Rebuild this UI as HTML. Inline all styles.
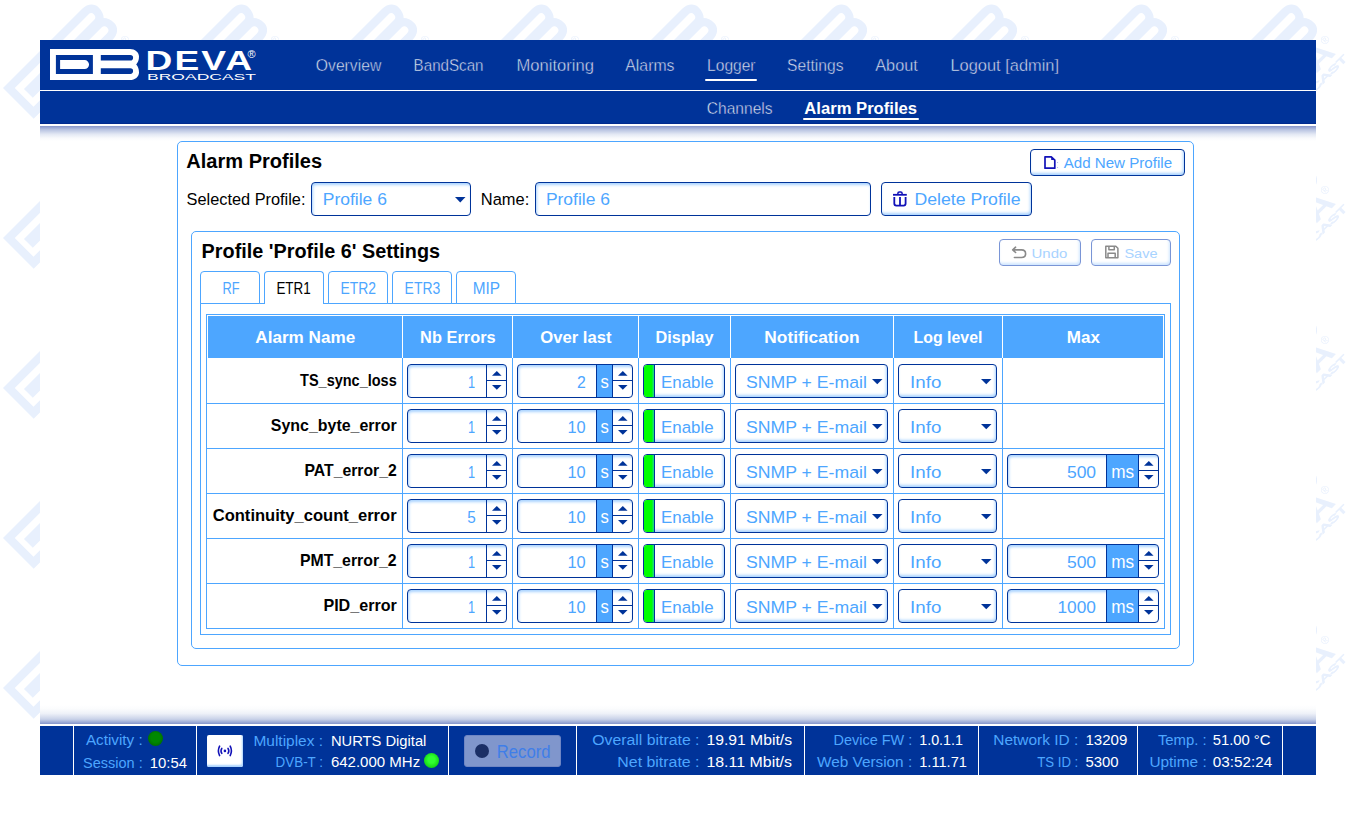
<!DOCTYPE html>
<html><head><meta charset="utf-8"><style>
html,body{margin:0;padding:0;}
body{width:1356px;height:815px;position:relative;overflow:hidden;background:#fff;font-family:"Liberation Sans", sans-serif;}
svg text{font-family:"Liberation Sans", sans-serif;}
</style></head><body>
<svg style="position:absolute;left:0;top:0" width="1350" height="775"><defs><pattern id="wm" x="0" y="0" width="150" height="150" patternUnits="userSpaceOnUse">
<g transform="translate(3,88) rotate(-45) scale(1.4)" fill="#e8f0fd">
<path fill-rule="evenodd" d="M0 0H80C85 0 89 3.2 89 7.6C89 11 88 13.6 86.2 15.5C88 17.4 89 20 89 23.4C89 27.8 85 31 80 31H0Z M5.9 6H42.9V24.9H5.9Z M10.1 11.1H34.6A4.45 4.45 0 0 1 34.6 20H10.1Z M50.8 6H80.3A2.8 2.8 0 0 1 80.3 11.6H50.8Z M50.8 19.3H80.3A2.8 2.8 0 0 1 80.3 24.9H50.8Z"/>
<text x="7" y="50" font-weight="bold" font-size="21" textLength="78" lengthAdjust="spacingAndGlyphs">DEVA</text>
<text x="83" y="40" font-size="8">®</text>
<text x="7" y="58.5" font-size="6.8" stroke="#e8f0fd" stroke-width="0.5" textLength="81" lengthAdjust="spacingAndGlyphs">BROADCAST</text>
</g></pattern></defs><rect width="1350" height="775" fill="url(#wm)"/></svg>
<div style="position:absolute;left:40px;top:40px;width:1276px;height:735px;box-sizing:border-box;background:#fff;"></div>
<div style="position:absolute;left:40px;top:40px;width:1276px;height:50px;box-sizing:border-box;background:#003399;"></div>
<div style="position:absolute;left:40px;top:90px;width:1276px;height:1px;box-sizing:border-box;background:#fff;"></div>
<div style="position:absolute;left:40px;top:91px;width:1276px;height:33px;box-sizing:border-box;background:#003399;"></div>
<div style="position:absolute;left:40px;top:124px;width:1276px;height:2px;box-sizing:border-box;background:#fff;"></div>
<div style="position:absolute;left:40px;top:123px;width:1276px;height:1px;box-sizing:border-box;background:#002a8f;"></div>
<div style="position:absolute;left:40px;top:126px;width:1276px;height:15px;box-sizing:border-box;background:linear-gradient(#8595cb,#b9c4e2 25%,#e3e8f4 55%,#f8f9fc 80%,#ffffff);"></div>
<svg style="position:absolute;left:50px;top:49px;overflow:visible" width="210" height="32" viewBox="0 0 210 32"><path fill="#fff" fill-rule="evenodd" d="M0 0H80C85 0 89 3.2 89 7.6C89 11 88 13.6 86.2 15.5C88 17.4 89 20 89 23.4C89 27.8 85 31 80 31H0Z M5.9 6H42.9V24.9H5.9Z M10.1 11.1H34.6A4.45 4.45 0 0 1 34.6 20H10.1Z M50.8 6H80.3A2.8 2.8 0 0 1 80.3 11.6H50.8Z M50.8 19.3H80.3A2.8 2.8 0 0 1 80.3 24.9H50.8Z"/>
<text x="95.6" y="20.6" font-weight="bold" font-size="27.5" fill="#fff" textLength="108.5" lengthAdjust="spacingAndGlyphs" style="letter-spacing:1.5px">DEVA</text>
<text x="197.5" y="9" font-size="11" fill="#fff">®</text>
<text x="97" y="30.7" font-size="8.4" fill="#fff" textLength="109" lengthAdjust="spacingAndGlyphs">BROADCAST</text></svg>
<div style="position:absolute;left:704.5px;top:79px;width:52px;height:2px;box-sizing:border-box;background:#fff;border-radius:1px;"></div>
<div style="position:absolute;left:802.5px;top:118px;width:116px;height:2px;box-sizing:border-box;background:#fff;border-radius:1px;"></div>
<div style="position:absolute;left:177px;top:141px;width:1017px;height:525px;box-sizing:border-box;border:1px solid #4da6ff;border-radius:5px;"></div>
<div style="position:absolute;left:1030px;top:149px;width:155px;height:27px;box-sizing:border-box;border:1px solid #003399;border-radius:4px;background:#fff;box-shadow:inset -1px -2px 3px #a9d3ff;"></div>
<svg style="position:absolute;left:1040px;top:152px;overflow:visible" width="24" height="20" viewBox="0 0 24 20"><path d="M5 4.8H11.3L14.8 8.2V16.2H5Z" fill="none" stroke="#1212b8" stroke-width="1.7" stroke-linejoin="round"/><path d="M11.2 4.8V8.1H14.8Z" fill="#1212b8"/><circle cx="17.6" cy="10.5" r="0.5" fill="#9aa0e0"/><circle cx="17.6" cy="15.5" r="0.5" fill="#9aa0e0"/></svg>
<div style="position:absolute;left:311px;top:182px;width:160px;height:34px;box-sizing:border-box;border:1px solid #003399;border-radius:4px;background:#fff;box-shadow:inset 1px 2px 3px #a9d3ff;"></div>
<svg style="position:absolute;left:454.5px;top:196.5px;overflow:visible" width="11" height="6" viewBox="0 0 11 6"><path d="M0 0H10.5L5.25 5.5Z" fill="#003399"/></svg>
<div style="position:absolute;left:535px;top:182px;width:336px;height:34px;box-sizing:border-box;border:1px solid #003399;border-radius:4px;background:#fff;box-shadow:inset 1px 2px 3px #a9d3ff;"></div>
<div style="position:absolute;left:881px;top:182px;width:151px;height:34px;box-sizing:border-box;border:1px solid #003399;border-radius:4px;background:#fff;box-shadow:inset -1px -2px 3px #a9d3ff;"></div>
<svg style="position:absolute;left:888px;top:186px;overflow:visible" width="24" height="24" viewBox="0 0 24 24"><g fill="none" stroke="#1212b8" stroke-width="1.8"><path d="M5 8.8H18.8"/><path d="M9.9 8V7.2Q9.9 5.9 11.3 5.9H12.7Q14.1 5.9 14.1 7.2V8" stroke-width="1.5"/><path d="M6.3 11V17.6Q6.3 19.6 8.3 19.6H15.6Q17.6 19.6 17.6 17.6V11M12 11V19.6"/></g></svg>
<div style="position:absolute;left:191px;top:231px;width:989px;height:418px;box-sizing:border-box;border:1px solid #4da6ff;border-radius:5px;"></div>
<div style="position:absolute;left:999px;top:239px;width:82px;height:27px;box-sizing:border-box;border:1px solid #7a95d6;border-radius:4px;background:#fff;box-shadow:inset -1px -2px 3px #cfe6ff;"></div>
<svg style="position:absolute;left:1008px;top:242px;overflow:visible" width="24" height="20" viewBox="0 0 24 20"><path d="M7.6 5.2L4.7 7.9L7.6 10.5M4.7 7.9H13.5Q17.6 7.9 17.6 11.7Q17.6 15.5 13.5 15.5H6.4" fill="none" stroke="#8a8a8a" stroke-width="1.6" stroke-linejoin="round" stroke-linecap="round"/></svg>
<div style="position:absolute;left:1091px;top:239px;width:80px;height:27px;box-sizing:border-box;border:1px solid #7a95d6;border-radius:4px;background:#fff;box-shadow:inset -1px -2px 3px #cfe6ff;"></div>
<svg style="position:absolute;left:1100px;top:241px;overflow:visible" width="24" height="22" viewBox="0 0 24 22"><g fill="none" stroke="#8a8a8a" stroke-width="1.5" stroke-linejoin="round"><path d="M5.8 5.2H15.8L17.9 7.3V16.8H5.8Z"/><path d="M8.9 5.2V8.7H14.3V5.2"/><path d="M8 16.8V12.3H15.2V16.8"/></g></svg>
<div style="position:absolute;left:200px;top:303px;width:971px;height:332px;box-sizing:border-box;border:1px solid #4da6ff;"></div>
<div style="position:absolute;left:200px;top:271px;width:60px;height:33px;box-sizing:border-box;border:1px solid #4da6ff;border-radius:4px 4px 0 0;background:#fff;"></div>
<div style="position:absolute;left:264px;top:271px;width:60px;height:33px;box-sizing:border-box;border:1px solid #4da6ff;border-bottom:none;border-radius:4px 4px 0 0;background:#fff;"></div>
<div style="position:absolute;left:328px;top:271px;width:60px;height:33px;box-sizing:border-box;border:1px solid #4da6ff;border-radius:4px 4px 0 0;background:#fff;"></div>
<div style="position:absolute;left:392px;top:271px;width:60px;height:33px;box-sizing:border-box;border:1px solid #4da6ff;border-radius:4px 4px 0 0;background:#fff;"></div>
<div style="position:absolute;left:456px;top:271px;width:60px;height:33px;box-sizing:border-box;border:1px solid #4da6ff;border-radius:4px 4px 0 0;background:#fff;"></div>
<div style="position:absolute;left:206px;top:314px;width:959px;height:315px;box-sizing:border-box;border:1px solid #4da6ff;"></div>
<div style="position:absolute;left:208px;top:316px;width:955px;height:42px;box-sizing:border-box;background:#4da6ff;"></div>
<div style="position:absolute;left:402px;top:316px;width:1px;height:42px;box-sizing:border-box;background:#fff;"></div>
<div style="position:absolute;left:402px;top:358px;width:1px;height:270px;box-sizing:border-box;background:#4da6ff;"></div>
<div style="position:absolute;left:512px;top:316px;width:1px;height:42px;box-sizing:border-box;background:#fff;"></div>
<div style="position:absolute;left:512px;top:358px;width:1px;height:270px;box-sizing:border-box;background:#4da6ff;"></div>
<div style="position:absolute;left:638px;top:316px;width:1px;height:42px;box-sizing:border-box;background:#fff;"></div>
<div style="position:absolute;left:638px;top:358px;width:1px;height:270px;box-sizing:border-box;background:#4da6ff;"></div>
<div style="position:absolute;left:730px;top:316px;width:1px;height:42px;box-sizing:border-box;background:#fff;"></div>
<div style="position:absolute;left:730px;top:358px;width:1px;height:270px;box-sizing:border-box;background:#4da6ff;"></div>
<div style="position:absolute;left:893px;top:316px;width:1px;height:42px;box-sizing:border-box;background:#fff;"></div>
<div style="position:absolute;left:893px;top:358px;width:1px;height:270px;box-sizing:border-box;background:#4da6ff;"></div>
<div style="position:absolute;left:1002px;top:316px;width:1px;height:42px;box-sizing:border-box;background:#fff;"></div>
<div style="position:absolute;left:1002px;top:358px;width:1px;height:270px;box-sizing:border-box;background:#4da6ff;"></div>
<div style="position:absolute;left:206px;top:403px;width:959px;height:1px;box-sizing:border-box;background:#4da6ff;"></div>
<div style="position:absolute;left:206px;top:448px;width:959px;height:1px;box-sizing:border-box;background:#4da6ff;"></div>
<div style="position:absolute;left:206px;top:493px;width:959px;height:1px;box-sizing:border-box;background:#4da6ff;"></div>
<div style="position:absolute;left:206px;top:538px;width:959px;height:1px;box-sizing:border-box;background:#4da6ff;"></div>
<div style="position:absolute;left:206px;top:583px;width:959px;height:1px;box-sizing:border-box;background:#4da6ff;"></div>
<div style="position:absolute;left:407px;top:364px;width:100px;height:34px;box-sizing:border-box;border:1px solid #003399;border-radius:4px;background:#fff;box-shadow:inset 1px 2px 3px #a9d3ff;"></div>
<div style="position:absolute;left:486px;top:364px;width:1px;height:34px;box-sizing:border-box;background:#003399;"></div>
<div style="position:absolute;left:486.5px;top:380px;width:20px;height:1px;box-sizing:border-box;background:#003399;"></div>
<svg style="position:absolute;left:492.1px;top:371.1px;overflow:visible" width="10" height="4.7" viewBox="0 0 10 4.7"><path d="M0 4.7H9.6L4.8 0Z" fill="#003399"/></svg>
<svg style="position:absolute;left:492.1px;top:385.2px;overflow:visible" width="10" height="4.7" viewBox="0 0 10 4.7"><path d="M0 0H9.6L4.8 4.7Z" fill="#003399"/></svg>
<div style="position:absolute;left:517px;top:364px;width:116px;height:34px;box-sizing:border-box;border:1px solid #003399;border-radius:4px;background:#fff;box-shadow:inset 1px 2px 3px #a9d3ff;"></div>
<div style="position:absolute;left:596.5px;top:365px;width:16px;height:32px;box-sizing:border-box;background:#4da6ff;"></div>
<div style="position:absolute;left:596px;top:364px;width:1px;height:34px;box-sizing:border-box;background:#003399;"></div>
<div style="position:absolute;left:612px;top:364px;width:1px;height:34px;box-sizing:border-box;background:#003399;"></div>
<div style="position:absolute;left:612.5px;top:380px;width:20px;height:1px;box-sizing:border-box;background:#003399;"></div>
<svg style="position:absolute;left:618.1px;top:371.1px;overflow:visible" width="10" height="4.7" viewBox="0 0 10 4.7"><path d="M0 4.7H9.6L4.8 0Z" fill="#003399"/></svg>
<svg style="position:absolute;left:618.1px;top:385.2px;overflow:visible" width="10" height="4.7" viewBox="0 0 10 4.7"><path d="M0 0H9.6L4.8 4.7Z" fill="#003399"/></svg>
<div style="position:absolute;left:643px;top:364px;width:82px;height:34px;box-sizing:border-box;border:1px solid #003399;border-radius:4px;background:#fff;box-shadow:inset -1px -2px 3px #a9d3ff;"></div>
<div style="position:absolute;left:644px;top:365px;width:10px;height:32px;box-sizing:border-box;background:linear-gradient(90deg,#00ff00 75%,#20d890);border-radius:3px 0 0 3px;"></div>
<div style="position:absolute;left:653.5px;top:364px;width:1px;height:34px;box-sizing:border-box;background:#003399;"></div>
<div style="position:absolute;left:735px;top:364px;width:153px;height:34px;box-sizing:border-box;border:1px solid #003399;border-radius:4px;background:#fff;box-shadow:inset -1px -2px 3px #a9d3ff;"></div>
<svg style="position:absolute;left:871.5px;top:378.7px;overflow:visible" width="10.5" height="6" viewBox="0 0 10.5 6"><path d="M0 0H10H10.5L5.25 5.2Z" fill="#003399"/></svg>
<div style="position:absolute;left:898px;top:364px;width:99px;height:34px;box-sizing:border-box;border:1px solid #003399;border-radius:4px;background:#fff;box-shadow:inset -1px -2px 3px #a9d3ff;"></div>
<svg style="position:absolute;left:981px;top:379px;overflow:visible" width="10.5" height="6" viewBox="0 0 10.5 6"><path d="M0 0H10.5L5.25 5.2Z" fill="#003399"/></svg>
<div style="position:absolute;left:407px;top:409px;width:100px;height:34px;box-sizing:border-box;border:1px solid #003399;border-radius:4px;background:#fff;box-shadow:inset 1px 2px 3px #a9d3ff;"></div>
<div style="position:absolute;left:486px;top:409px;width:1px;height:34px;box-sizing:border-box;background:#003399;"></div>
<div style="position:absolute;left:486.5px;top:425px;width:20px;height:1px;box-sizing:border-box;background:#003399;"></div>
<svg style="position:absolute;left:492.1px;top:416.1px;overflow:visible" width="10" height="4.7" viewBox="0 0 10 4.7"><path d="M0 4.7H9.6L4.8 0Z" fill="#003399"/></svg>
<svg style="position:absolute;left:492.1px;top:430.2px;overflow:visible" width="10" height="4.7" viewBox="0 0 10 4.7"><path d="M0 0H9.6L4.8 4.7Z" fill="#003399"/></svg>
<div style="position:absolute;left:517px;top:409px;width:116px;height:34px;box-sizing:border-box;border:1px solid #003399;border-radius:4px;background:#fff;box-shadow:inset 1px 2px 3px #a9d3ff;"></div>
<div style="position:absolute;left:596.5px;top:410px;width:16px;height:32px;box-sizing:border-box;background:#4da6ff;"></div>
<div style="position:absolute;left:596px;top:409px;width:1px;height:34px;box-sizing:border-box;background:#003399;"></div>
<div style="position:absolute;left:612px;top:409px;width:1px;height:34px;box-sizing:border-box;background:#003399;"></div>
<div style="position:absolute;left:612.5px;top:425px;width:20px;height:1px;box-sizing:border-box;background:#003399;"></div>
<svg style="position:absolute;left:618.1px;top:416.1px;overflow:visible" width="10" height="4.7" viewBox="0 0 10 4.7"><path d="M0 4.7H9.6L4.8 0Z" fill="#003399"/></svg>
<svg style="position:absolute;left:618.1px;top:430.2px;overflow:visible" width="10" height="4.7" viewBox="0 0 10 4.7"><path d="M0 0H9.6L4.8 4.7Z" fill="#003399"/></svg>
<div style="position:absolute;left:643px;top:409px;width:82px;height:34px;box-sizing:border-box;border:1px solid #003399;border-radius:4px;background:#fff;box-shadow:inset -1px -2px 3px #a9d3ff;"></div>
<div style="position:absolute;left:644px;top:410px;width:10px;height:32px;box-sizing:border-box;background:linear-gradient(90deg,#00ff00 75%,#20d890);border-radius:3px 0 0 3px;"></div>
<div style="position:absolute;left:653.5px;top:409px;width:1px;height:34px;box-sizing:border-box;background:#003399;"></div>
<div style="position:absolute;left:735px;top:409px;width:153px;height:34px;box-sizing:border-box;border:1px solid #003399;border-radius:4px;background:#fff;box-shadow:inset -1px -2px 3px #a9d3ff;"></div>
<svg style="position:absolute;left:871.5px;top:423.7px;overflow:visible" width="10.5" height="6" viewBox="0 0 10.5 6"><path d="M0 0H10H10.5L5.25 5.2Z" fill="#003399"/></svg>
<div style="position:absolute;left:898px;top:409px;width:99px;height:34px;box-sizing:border-box;border:1px solid #003399;border-radius:4px;background:#fff;box-shadow:inset -1px -2px 3px #a9d3ff;"></div>
<svg style="position:absolute;left:981px;top:424px;overflow:visible" width="10.5" height="6" viewBox="0 0 10.5 6"><path d="M0 0H10.5L5.25 5.2Z" fill="#003399"/></svg>
<div style="position:absolute;left:407px;top:454px;width:100px;height:34px;box-sizing:border-box;border:1px solid #003399;border-radius:4px;background:#fff;box-shadow:inset 1px 2px 3px #a9d3ff;"></div>
<div style="position:absolute;left:486px;top:454px;width:1px;height:34px;box-sizing:border-box;background:#003399;"></div>
<div style="position:absolute;left:486.5px;top:470px;width:20px;height:1px;box-sizing:border-box;background:#003399;"></div>
<svg style="position:absolute;left:492.1px;top:461.1px;overflow:visible" width="10" height="4.7" viewBox="0 0 10 4.7"><path d="M0 4.7H9.6L4.8 0Z" fill="#003399"/></svg>
<svg style="position:absolute;left:492.1px;top:475.2px;overflow:visible" width="10" height="4.7" viewBox="0 0 10 4.7"><path d="M0 0H9.6L4.8 4.7Z" fill="#003399"/></svg>
<div style="position:absolute;left:517px;top:454px;width:116px;height:34px;box-sizing:border-box;border:1px solid #003399;border-radius:4px;background:#fff;box-shadow:inset 1px 2px 3px #a9d3ff;"></div>
<div style="position:absolute;left:596.5px;top:455px;width:16px;height:32px;box-sizing:border-box;background:#4da6ff;"></div>
<div style="position:absolute;left:596px;top:454px;width:1px;height:34px;box-sizing:border-box;background:#003399;"></div>
<div style="position:absolute;left:612px;top:454px;width:1px;height:34px;box-sizing:border-box;background:#003399;"></div>
<div style="position:absolute;left:612.5px;top:470px;width:20px;height:1px;box-sizing:border-box;background:#003399;"></div>
<svg style="position:absolute;left:618.1px;top:461.1px;overflow:visible" width="10" height="4.7" viewBox="0 0 10 4.7"><path d="M0 4.7H9.6L4.8 0Z" fill="#003399"/></svg>
<svg style="position:absolute;left:618.1px;top:475.2px;overflow:visible" width="10" height="4.7" viewBox="0 0 10 4.7"><path d="M0 0H9.6L4.8 4.7Z" fill="#003399"/></svg>
<div style="position:absolute;left:643px;top:454px;width:82px;height:34px;box-sizing:border-box;border:1px solid #003399;border-radius:4px;background:#fff;box-shadow:inset -1px -2px 3px #a9d3ff;"></div>
<div style="position:absolute;left:644px;top:455px;width:10px;height:32px;box-sizing:border-box;background:linear-gradient(90deg,#00ff00 75%,#20d890);border-radius:3px 0 0 3px;"></div>
<div style="position:absolute;left:653.5px;top:454px;width:1px;height:34px;box-sizing:border-box;background:#003399;"></div>
<div style="position:absolute;left:735px;top:454px;width:153px;height:34px;box-sizing:border-box;border:1px solid #003399;border-radius:4px;background:#fff;box-shadow:inset -1px -2px 3px #a9d3ff;"></div>
<svg style="position:absolute;left:871.5px;top:468.7px;overflow:visible" width="10.5" height="6" viewBox="0 0 10.5 6"><path d="M0 0H10H10.5L5.25 5.2Z" fill="#003399"/></svg>
<div style="position:absolute;left:898px;top:454px;width:99px;height:34px;box-sizing:border-box;border:1px solid #003399;border-radius:4px;background:#fff;box-shadow:inset -1px -2px 3px #a9d3ff;"></div>
<svg style="position:absolute;left:981px;top:469px;overflow:visible" width="10.5" height="6" viewBox="0 0 10.5 6"><path d="M0 0H10.5L5.25 5.2Z" fill="#003399"/></svg>
<div style="position:absolute;left:1007px;top:454px;width:152px;height:34px;box-sizing:border-box;border:1px solid #003399;border-radius:4px;background:#fff;box-shadow:inset 1px 2px 3px #a9d3ff;"></div>
<div style="position:absolute;left:1106px;top:455px;width:32px;height:32px;box-sizing:border-box;background:#4da6ff;"></div>
<div style="position:absolute;left:1106px;top:454px;width:1px;height:34px;box-sizing:border-box;background:#003399;"></div>
<div style="position:absolute;left:1138px;top:454px;width:1px;height:34px;box-sizing:border-box;background:#003399;"></div>
<div style="position:absolute;left:1138.5px;top:470px;width:20px;height:1px;box-sizing:border-box;background:#003399;"></div>
<svg style="position:absolute;left:1144.1px;top:461.1px;overflow:visible" width="10" height="4.7" viewBox="0 0 10 4.7"><path d="M0 4.7H9.6L4.8 0Z" fill="#003399"/></svg>
<svg style="position:absolute;left:1144.1px;top:475.2px;overflow:visible" width="10" height="4.7" viewBox="0 0 10 4.7"><path d="M0 0H9.6L4.8 4.7Z" fill="#003399"/></svg>
<div style="position:absolute;left:407px;top:499px;width:100px;height:34px;box-sizing:border-box;border:1px solid #003399;border-radius:4px;background:#fff;box-shadow:inset 1px 2px 3px #a9d3ff;"></div>
<div style="position:absolute;left:486px;top:499px;width:1px;height:34px;box-sizing:border-box;background:#003399;"></div>
<div style="position:absolute;left:486.5px;top:515px;width:20px;height:1px;box-sizing:border-box;background:#003399;"></div>
<svg style="position:absolute;left:492.1px;top:506.1px;overflow:visible" width="10" height="4.7" viewBox="0 0 10 4.7"><path d="M0 4.7H9.6L4.8 0Z" fill="#003399"/></svg>
<svg style="position:absolute;left:492.1px;top:520.2px;overflow:visible" width="10" height="4.7" viewBox="0 0 10 4.7"><path d="M0 0H9.6L4.8 4.7Z" fill="#003399"/></svg>
<div style="position:absolute;left:517px;top:499px;width:116px;height:34px;box-sizing:border-box;border:1px solid #003399;border-radius:4px;background:#fff;box-shadow:inset 1px 2px 3px #a9d3ff;"></div>
<div style="position:absolute;left:596.5px;top:500px;width:16px;height:32px;box-sizing:border-box;background:#4da6ff;"></div>
<div style="position:absolute;left:596px;top:499px;width:1px;height:34px;box-sizing:border-box;background:#003399;"></div>
<div style="position:absolute;left:612px;top:499px;width:1px;height:34px;box-sizing:border-box;background:#003399;"></div>
<div style="position:absolute;left:612.5px;top:515px;width:20px;height:1px;box-sizing:border-box;background:#003399;"></div>
<svg style="position:absolute;left:618.1px;top:506.1px;overflow:visible" width="10" height="4.7" viewBox="0 0 10 4.7"><path d="M0 4.7H9.6L4.8 0Z" fill="#003399"/></svg>
<svg style="position:absolute;left:618.1px;top:520.2px;overflow:visible" width="10" height="4.7" viewBox="0 0 10 4.7"><path d="M0 0H9.6L4.8 4.7Z" fill="#003399"/></svg>
<div style="position:absolute;left:643px;top:499px;width:82px;height:34px;box-sizing:border-box;border:1px solid #003399;border-radius:4px;background:#fff;box-shadow:inset -1px -2px 3px #a9d3ff;"></div>
<div style="position:absolute;left:644px;top:500px;width:10px;height:32px;box-sizing:border-box;background:linear-gradient(90deg,#00ff00 75%,#20d890);border-radius:3px 0 0 3px;"></div>
<div style="position:absolute;left:653.5px;top:499px;width:1px;height:34px;box-sizing:border-box;background:#003399;"></div>
<div style="position:absolute;left:735px;top:499px;width:153px;height:34px;box-sizing:border-box;border:1px solid #003399;border-radius:4px;background:#fff;box-shadow:inset -1px -2px 3px #a9d3ff;"></div>
<svg style="position:absolute;left:871.5px;top:513.7px;overflow:visible" width="10.5" height="6" viewBox="0 0 10.5 6"><path d="M0 0H10H10.5L5.25 5.2Z" fill="#003399"/></svg>
<div style="position:absolute;left:898px;top:499px;width:99px;height:34px;box-sizing:border-box;border:1px solid #003399;border-radius:4px;background:#fff;box-shadow:inset -1px -2px 3px #a9d3ff;"></div>
<svg style="position:absolute;left:981px;top:514px;overflow:visible" width="10.5" height="6" viewBox="0 0 10.5 6"><path d="M0 0H10.5L5.25 5.2Z" fill="#003399"/></svg>
<div style="position:absolute;left:407px;top:544px;width:100px;height:34px;box-sizing:border-box;border:1px solid #003399;border-radius:4px;background:#fff;box-shadow:inset 1px 2px 3px #a9d3ff;"></div>
<div style="position:absolute;left:486px;top:544px;width:1px;height:34px;box-sizing:border-box;background:#003399;"></div>
<div style="position:absolute;left:486.5px;top:560px;width:20px;height:1px;box-sizing:border-box;background:#003399;"></div>
<svg style="position:absolute;left:492.1px;top:551.1px;overflow:visible" width="10" height="4.7" viewBox="0 0 10 4.7"><path d="M0 4.7H9.6L4.8 0Z" fill="#003399"/></svg>
<svg style="position:absolute;left:492.1px;top:565.2px;overflow:visible" width="10" height="4.7" viewBox="0 0 10 4.7"><path d="M0 0H9.6L4.8 4.7Z" fill="#003399"/></svg>
<div style="position:absolute;left:517px;top:544px;width:116px;height:34px;box-sizing:border-box;border:1px solid #003399;border-radius:4px;background:#fff;box-shadow:inset 1px 2px 3px #a9d3ff;"></div>
<div style="position:absolute;left:596.5px;top:545px;width:16px;height:32px;box-sizing:border-box;background:#4da6ff;"></div>
<div style="position:absolute;left:596px;top:544px;width:1px;height:34px;box-sizing:border-box;background:#003399;"></div>
<div style="position:absolute;left:612px;top:544px;width:1px;height:34px;box-sizing:border-box;background:#003399;"></div>
<div style="position:absolute;left:612.5px;top:560px;width:20px;height:1px;box-sizing:border-box;background:#003399;"></div>
<svg style="position:absolute;left:618.1px;top:551.1px;overflow:visible" width="10" height="4.7" viewBox="0 0 10 4.7"><path d="M0 4.7H9.6L4.8 0Z" fill="#003399"/></svg>
<svg style="position:absolute;left:618.1px;top:565.2px;overflow:visible" width="10" height="4.7" viewBox="0 0 10 4.7"><path d="M0 0H9.6L4.8 4.7Z" fill="#003399"/></svg>
<div style="position:absolute;left:643px;top:544px;width:82px;height:34px;box-sizing:border-box;border:1px solid #003399;border-radius:4px;background:#fff;box-shadow:inset -1px -2px 3px #a9d3ff;"></div>
<div style="position:absolute;left:644px;top:545px;width:10px;height:32px;box-sizing:border-box;background:linear-gradient(90deg,#00ff00 75%,#20d890);border-radius:3px 0 0 3px;"></div>
<div style="position:absolute;left:653.5px;top:544px;width:1px;height:34px;box-sizing:border-box;background:#003399;"></div>
<div style="position:absolute;left:735px;top:544px;width:153px;height:34px;box-sizing:border-box;border:1px solid #003399;border-radius:4px;background:#fff;box-shadow:inset -1px -2px 3px #a9d3ff;"></div>
<svg style="position:absolute;left:871.5px;top:558.7px;overflow:visible" width="10.5" height="6" viewBox="0 0 10.5 6"><path d="M0 0H10H10.5L5.25 5.2Z" fill="#003399"/></svg>
<div style="position:absolute;left:898px;top:544px;width:99px;height:34px;box-sizing:border-box;border:1px solid #003399;border-radius:4px;background:#fff;box-shadow:inset -1px -2px 3px #a9d3ff;"></div>
<svg style="position:absolute;left:981px;top:559px;overflow:visible" width="10.5" height="6" viewBox="0 0 10.5 6"><path d="M0 0H10.5L5.25 5.2Z" fill="#003399"/></svg>
<div style="position:absolute;left:1007px;top:544px;width:152px;height:34px;box-sizing:border-box;border:1px solid #003399;border-radius:4px;background:#fff;box-shadow:inset 1px 2px 3px #a9d3ff;"></div>
<div style="position:absolute;left:1106px;top:545px;width:32px;height:32px;box-sizing:border-box;background:#4da6ff;"></div>
<div style="position:absolute;left:1106px;top:544px;width:1px;height:34px;box-sizing:border-box;background:#003399;"></div>
<div style="position:absolute;left:1138px;top:544px;width:1px;height:34px;box-sizing:border-box;background:#003399;"></div>
<div style="position:absolute;left:1138.5px;top:560px;width:20px;height:1px;box-sizing:border-box;background:#003399;"></div>
<svg style="position:absolute;left:1144.1px;top:551.1px;overflow:visible" width="10" height="4.7" viewBox="0 0 10 4.7"><path d="M0 4.7H9.6L4.8 0Z" fill="#003399"/></svg>
<svg style="position:absolute;left:1144.1px;top:565.2px;overflow:visible" width="10" height="4.7" viewBox="0 0 10 4.7"><path d="M0 0H9.6L4.8 4.7Z" fill="#003399"/></svg>
<div style="position:absolute;left:407px;top:589px;width:100px;height:34px;box-sizing:border-box;border:1px solid #003399;border-radius:4px;background:#fff;box-shadow:inset 1px 2px 3px #a9d3ff;"></div>
<div style="position:absolute;left:486px;top:589px;width:1px;height:34px;box-sizing:border-box;background:#003399;"></div>
<div style="position:absolute;left:486.5px;top:605px;width:20px;height:1px;box-sizing:border-box;background:#003399;"></div>
<svg style="position:absolute;left:492.1px;top:596.1px;overflow:visible" width="10" height="4.7" viewBox="0 0 10 4.7"><path d="M0 4.7H9.6L4.8 0Z" fill="#003399"/></svg>
<svg style="position:absolute;left:492.1px;top:610.2px;overflow:visible" width="10" height="4.7" viewBox="0 0 10 4.7"><path d="M0 0H9.6L4.8 4.7Z" fill="#003399"/></svg>
<div style="position:absolute;left:517px;top:589px;width:116px;height:34px;box-sizing:border-box;border:1px solid #003399;border-radius:4px;background:#fff;box-shadow:inset 1px 2px 3px #a9d3ff;"></div>
<div style="position:absolute;left:596.5px;top:590px;width:16px;height:32px;box-sizing:border-box;background:#4da6ff;"></div>
<div style="position:absolute;left:596px;top:589px;width:1px;height:34px;box-sizing:border-box;background:#003399;"></div>
<div style="position:absolute;left:612px;top:589px;width:1px;height:34px;box-sizing:border-box;background:#003399;"></div>
<div style="position:absolute;left:612.5px;top:605px;width:20px;height:1px;box-sizing:border-box;background:#003399;"></div>
<svg style="position:absolute;left:618.1px;top:596.1px;overflow:visible" width="10" height="4.7" viewBox="0 0 10 4.7"><path d="M0 4.7H9.6L4.8 0Z" fill="#003399"/></svg>
<svg style="position:absolute;left:618.1px;top:610.2px;overflow:visible" width="10" height="4.7" viewBox="0 0 10 4.7"><path d="M0 0H9.6L4.8 4.7Z" fill="#003399"/></svg>
<div style="position:absolute;left:643px;top:589px;width:82px;height:34px;box-sizing:border-box;border:1px solid #003399;border-radius:4px;background:#fff;box-shadow:inset -1px -2px 3px #a9d3ff;"></div>
<div style="position:absolute;left:644px;top:590px;width:10px;height:32px;box-sizing:border-box;background:linear-gradient(90deg,#00ff00 75%,#20d890);border-radius:3px 0 0 3px;"></div>
<div style="position:absolute;left:653.5px;top:589px;width:1px;height:34px;box-sizing:border-box;background:#003399;"></div>
<div style="position:absolute;left:735px;top:589px;width:153px;height:34px;box-sizing:border-box;border:1px solid #003399;border-radius:4px;background:#fff;box-shadow:inset -1px -2px 3px #a9d3ff;"></div>
<svg style="position:absolute;left:871.5px;top:603.7px;overflow:visible" width="10.5" height="6" viewBox="0 0 10.5 6"><path d="M0 0H10H10.5L5.25 5.2Z" fill="#003399"/></svg>
<div style="position:absolute;left:898px;top:589px;width:99px;height:34px;box-sizing:border-box;border:1px solid #003399;border-radius:4px;background:#fff;box-shadow:inset -1px -2px 3px #a9d3ff;"></div>
<svg style="position:absolute;left:981px;top:604px;overflow:visible" width="10.5" height="6" viewBox="0 0 10.5 6"><path d="M0 0H10.5L5.25 5.2Z" fill="#003399"/></svg>
<div style="position:absolute;left:1007px;top:589px;width:152px;height:34px;box-sizing:border-box;border:1px solid #003399;border-radius:4px;background:#fff;box-shadow:inset 1px 2px 3px #a9d3ff;"></div>
<div style="position:absolute;left:1106px;top:590px;width:32px;height:32px;box-sizing:border-box;background:#4da6ff;"></div>
<div style="position:absolute;left:1106px;top:589px;width:1px;height:34px;box-sizing:border-box;background:#003399;"></div>
<div style="position:absolute;left:1138px;top:589px;width:1px;height:34px;box-sizing:border-box;background:#003399;"></div>
<div style="position:absolute;left:1138.5px;top:605px;width:20px;height:1px;box-sizing:border-box;background:#003399;"></div>
<svg style="position:absolute;left:1144.1px;top:596.1px;overflow:visible" width="10" height="4.7" viewBox="0 0 10 4.7"><path d="M0 4.7H9.6L4.8 0Z" fill="#003399"/></svg>
<svg style="position:absolute;left:1144.1px;top:610.2px;overflow:visible" width="10" height="4.7" viewBox="0 0 10 4.7"><path d="M0 0H9.6L4.8 4.7Z" fill="#003399"/></svg>
<div style="position:absolute;left:40px;top:705px;width:1276px;height:19px;box-sizing:border-box;background:linear-gradient(#ffffff,#fbfcfd 20%,#eef1f8 45%,#c8d1e8 75%,#8596cc);"></div>
<div style="position:absolute;left:40px;top:726px;width:1276px;height:49px;box-sizing:border-box;background:#003399;"></div>
<div style="position:absolute;left:73px;top:726px;width:1px;height:49px;box-sizing:border-box;background:#fff;"></div>
<div style="position:absolute;left:196px;top:726px;width:1px;height:49px;box-sizing:border-box;background:#fff;"></div>
<div style="position:absolute;left:448px;top:726px;width:1px;height:49px;box-sizing:border-box;background:#fff;"></div>
<div style="position:absolute;left:576px;top:726px;width:1px;height:49px;box-sizing:border-box;background:#fff;"></div>
<div style="position:absolute;left:804px;top:726px;width:1px;height:49px;box-sizing:border-box;background:#fff;"></div>
<div style="position:absolute;left:978px;top:726px;width:1px;height:49px;box-sizing:border-box;background:#fff;"></div>
<div style="position:absolute;left:1137px;top:726px;width:1px;height:49px;box-sizing:border-box;background:#fff;"></div>
<div style="position:absolute;left:1282px;top:726px;width:1px;height:49px;box-sizing:border-box;background:#fff;"></div>
<div style="position:absolute;left:148px;top:731px;width:15px;height:15px;box-sizing:border-box;border-radius:50%;background:radial-gradient(circle at 50% 45%,#008800 40%,#005a00);"></div>
<div style="position:absolute;left:207px;top:735px;width:36px;height:32px;box-sizing:border-box;background:#fff;border-radius:2px;box-shadow:inset -1px -2px 2px #a9d3ff;"></div>
<svg style="position:absolute;left:205px;top:733px;overflow:visible" width="40" height="36" viewBox="0 0 40 36"><g fill="none" stroke="#1212b8" stroke-width="1.6" stroke-linecap="round"><path d="M14.6 13.2Q12.2 17.9 14.6 22.6"/><path d="M16.8 15.4Q15.2 17.9 16.8 20.4"/><path d="M23 15.4Q24.6 17.9 23 20.4"/><path d="M25.2 13.2Q27.6 17.9 25.2 22.6"/></g><circle cx="19.9" cy="17.9" r="1.3" fill="#1212b8"/></svg>
<div style="position:absolute;left:424px;top:753px;width:15px;height:15px;box-sizing:border-box;border-radius:50%;background:radial-gradient(circle at 50% 45%,#30ff30 30%,#00b800);"></div>
<div style="position:absolute;left:464px;top:735px;width:97px;height:32px;box-sizing:border-box;background:#8096cc;border:1px solid #6f86c4;border-radius:3px;"></div>
<div style="position:absolute;left:474.8px;top:743.6px;width:14.6px;height:14.6px;box-sizing:border-box;border-radius:50%;background:#1b2f66;"></div>
<svg style="position:absolute;left:0;top:0" width="1356" height="815">
<text stroke="#003399" stroke-width="0.45" transform="translate(315.80,71.00) scale(0.9651,1)" x="-0.00" y="0" font-size="16.3" fill="#e2e7f4">Overview</text>
<text stroke="#003399" stroke-width="0.45" transform="translate(413.60,71.00) scale(0.9305,1)" x="-0.00" y="0" font-size="16.3" fill="#e2e7f4">BandScan</text>
<text stroke="#003399" stroke-width="0.45" transform="translate(516.50,71.00) scale(1.0181,1)" x="-0.00" y="0" font-size="16.3" fill="#e2e7f4">Monitoring</text>
<text stroke="#003399" stroke-width="0.45" transform="translate(625.30,71.00) scale(0.9698,1)" x="-0.00" y="0" font-size="16.3" fill="#e2e7f4">Alarms</text>
<text stroke="#003399" stroke-width="0.45" transform="translate(707.10,71.00) scale(0.9552,1)" x="-0.00" y="0" font-size="16.3" fill="#e2e7f4">Logger</text>
<text stroke="#003399" stroke-width="0.45" transform="translate(787.10,71.00) scale(0.9578,1)" x="-0.00" y="0" font-size="16.3" fill="#e2e7f4">Settings</text>
<text stroke="#003399" stroke-width="0.45" transform="translate(875.20,71.00) scale(1.0027,1)" x="-0.00" y="0" font-size="16.3" fill="#e2e7f4">About</text>
<text stroke="#003399" stroke-width="0.45" transform="translate(950.40,71.00) scale(1.0081,1)" x="-0.00" y="0" font-size="16.3" fill="#e2e7f4">Logout [admin]</text>
<text stroke="#003399" stroke-width="0.45" transform="translate(706.80,113.80) scale(0.9555,1)" x="-0.00" y="0" font-size="16.3" fill="#e2e7f4">Channels</text>
<text transform="translate(804.30,113.80) scale(1.0398,1)" x="-0.00" y="0" font-size="16" font-weight="bold" fill="#fff">Alarm Profiles</text>
<text transform="translate(186.30,168.00) scale(1.0022,1)" x="-0.00" y="0" font-size="20" font-weight="bold" fill="#000">Alarm Profiles</text>
<text transform="translate(1063.70,167.70) scale(1.0436,1)" x="-0.00" y="0" font-size="14.5" fill="#4da6ff">Add New Profile</text>
<text transform="translate(186.60,205.30) scale(0.9903,1)" x="-0.00" y="0" font-size="16.5" fill="#000">Selected Profile:</text>
<text transform="translate(322.80,204.70) scale(1.0593,1)" x="-0.00" y="0" font-size="16.5" fill="#4da6ff">Profile 6</text>
<text transform="translate(480.80,205.30) scale(0.9981,1)" x="-0.00" y="0" font-size="16.5" fill="#000">Name:</text>
<text transform="translate(545.90,204.70) scale(1.0593,1)" x="-0.00" y="0" font-size="16.5" fill="#4da6ff">Profile 6</text>
<text transform="translate(914.50,204.50) scale(1.0713,1)" x="-0.00" y="0" font-size="16.5" fill="#4da6ff">Delete Profile</text>
<text transform="translate(201.60,257.70) scale(1.0167,1)" x="-0.00" y="0" font-size="19.5" font-weight="bold" fill="#000">Profile 'Profile 6' Settings</text>
<text transform="translate(1031.50,257.80) scale(1.1096,1)" x="-0.00" y="0" font-size="13.5" fill="#a8d3ff">Undo</text>
<text transform="translate(1124.40,257.80) scale(1.0786,1)" x="-0.00" y="0" font-size="13.5" fill="#a8d3ff">Save</text>
<text transform="translate(222.50,293.60) scale(0.8021,1)" x="-0.00" y="0" font-size="16" fill="#4da6ff">RF</text>
<text transform="translate(276.40,293.60) scale(0.8415,1)" x="-0.00" y="0" font-size="16" fill="#000">ETR1</text>
<text transform="translate(340.50,293.60) scale(0.8708,1)" x="-0.00" y="0" font-size="16" fill="#4da6ff">ETR2</text>
<text transform="translate(404.60,293.60) scale(0.8708,1)" x="-0.00" y="0" font-size="16" fill="#4da6ff">ETR3</text>
<text transform="translate(472.80,293.60) scale(0.9599,1)" x="-0.00" y="0" font-size="16" fill="#4da6ff">MIP</text>
<text transform="translate(255.30,342.80) scale(1.0081,1)" x="-0.00" y="0" font-size="17" font-weight="bold" fill="#fff">Alarm Name</text>
<text transform="translate(420.10,342.80) scale(0.9641,1)" x="-0.00" y="0" font-size="17" font-weight="bold" fill="#fff">Nb Errors</text>
<text transform="translate(540.20,342.80) scale(0.9813,1)" x="-0.00" y="0" font-size="17" font-weight="bold" fill="#fff">Over last</text>
<text transform="translate(655.60,342.80) scale(0.9574,1)" x="-0.00" y="0" font-size="17" font-weight="bold" fill="#fff">Display</text>
<text transform="translate(764.30,342.80) scale(1.0203,1)" x="-0.00" y="0" font-size="17" font-weight="bold" fill="#fff">Notification</text>
<text transform="translate(913.60,342.80) scale(0.9349,1)" x="-0.00" y="0" font-size="17" font-weight="bold" fill="#fff">Log level</text>
<text transform="translate(1066.80,342.80) scale(1.0011,1)" x="-0.00" y="0" font-size="17" font-weight="bold" fill="#fff">Max</text>
<text transform="translate(300.10,385.70) scale(0.8787,1)" x="-0.00" y="0" font-size="16.5" font-weight="bold" fill="#000">TS_sync_loss</text>
<text transform="translate(467.90,388.00) scale(0.7753,1)" x="-0.00" y="0" font-size="16.5" fill="#4da6ff">1</text>
<text transform="translate(600.50,388.00) scale(0.9486,1)" x="-0.00" y="0" font-size="17.5" fill="#fff">s</text>
<text transform="translate(577.00,388.00) scale(0.9610,1)" x="-0.00" y="0" font-size="16.5" fill="#4da6ff">2</text>
<text transform="translate(661.00,388.00) scale(1.0253,1)" x="-0.00" y="0" font-size="16.5" fill="#4da6ff">Enable</text>
<text transform="translate(745.90,388.00) scale(1.0722,1)" x="-0.00" y="0" font-size="16.5" fill="#4da6ff">SNMP + E-mail</text>
<text transform="translate(910.10,388.00) scale(1.1340,1)" x="-0.00" y="0" font-size="16.5" fill="#4da6ff">Info</text>
<text transform="translate(270.80,430.70) scale(0.9675,1)" x="-0.00" y="0" font-size="16.5" font-weight="bold" fill="#000">Sync_byte_error</text>
<text transform="translate(467.90,433.00) scale(0.7753,1)" x="-0.00" y="0" font-size="16.5" fill="#4da6ff">1</text>
<text transform="translate(600.50,433.00) scale(0.9486,1)" x="-0.00" y="0" font-size="17.5" fill="#fff">s</text>
<text transform="translate(567.50,433.00) scale(0.9915,1)" x="-0.00" y="0" font-size="16.5" fill="#4da6ff">10</text>
<text transform="translate(661.00,433.00) scale(1.0253,1)" x="-0.00" y="0" font-size="16.5" fill="#4da6ff">Enable</text>
<text transform="translate(745.90,433.00) scale(1.0722,1)" x="-0.00" y="0" font-size="16.5" fill="#4da6ff">SNMP + E-mail</text>
<text transform="translate(910.10,433.00) scale(1.1340,1)" x="-0.00" y="0" font-size="16.5" fill="#4da6ff">Info</text>
<text transform="translate(304.50,475.70) scale(0.9554,1)" x="-0.00" y="0" font-size="16.5" font-weight="bold" fill="#000">PAT_error_2</text>
<text transform="translate(467.90,478.00) scale(0.7753,1)" x="-0.00" y="0" font-size="16.5" fill="#4da6ff">1</text>
<text transform="translate(600.50,478.00) scale(0.9486,1)" x="-0.00" y="0" font-size="17.5" fill="#fff">s</text>
<text transform="translate(567.50,478.00) scale(0.9915,1)" x="-0.00" y="0" font-size="16.5" fill="#4da6ff">10</text>
<text transform="translate(661.00,478.00) scale(1.0253,1)" x="-0.00" y="0" font-size="16.5" fill="#4da6ff">Enable</text>
<text transform="translate(745.90,478.00) scale(1.0722,1)" x="-0.00" y="0" font-size="16.5" fill="#4da6ff">SNMP + E-mail</text>
<text transform="translate(910.10,478.00) scale(1.1340,1)" x="-0.00" y="0" font-size="16.5" fill="#4da6ff">Info</text>
<text transform="translate(1111.30,478.00) scale(0.9820,1)" x="-0.00" y="0" font-size="17.5" fill="#fff">ms</text>
<text transform="translate(1066.90,478.00) scale(1.0613,1)" x="-0.00" y="0" font-size="16.5" fill="#4da6ff">500</text>
<text transform="translate(212.70,520.70) scale(1.0041,1)" x="-0.00" y="0" font-size="16.5" font-weight="bold" fill="#000">Continuity_count_error</text>
<text transform="translate(467.30,523.00) scale(0.9282,1)" x="-0.00" y="0" font-size="16.5" fill="#4da6ff">5</text>
<text transform="translate(600.50,523.00) scale(0.9486,1)" x="-0.00" y="0" font-size="17.5" fill="#fff">s</text>
<text transform="translate(567.50,523.00) scale(0.9915,1)" x="-0.00" y="0" font-size="16.5" fill="#4da6ff">10</text>
<text transform="translate(661.00,523.00) scale(1.0253,1)" x="-0.00" y="0" font-size="16.5" fill="#4da6ff">Enable</text>
<text transform="translate(745.90,523.00) scale(1.0722,1)" x="-0.00" y="0" font-size="16.5" fill="#4da6ff">SNMP + E-mail</text>
<text transform="translate(910.10,523.00) scale(1.1340,1)" x="-0.00" y="0" font-size="16.5" fill="#4da6ff">Info</text>
<text transform="translate(299.90,565.70) scale(0.9604,1)" x="-0.00" y="0" font-size="16.5" font-weight="bold" fill="#000">PMT_error_2</text>
<text transform="translate(467.90,568.00) scale(0.7753,1)" x="-0.00" y="0" font-size="16.5" fill="#4da6ff">1</text>
<text transform="translate(600.50,568.00) scale(0.9486,1)" x="-0.00" y="0" font-size="17.5" fill="#fff">s</text>
<text transform="translate(567.50,568.00) scale(0.9915,1)" x="-0.00" y="0" font-size="16.5" fill="#4da6ff">10</text>
<text transform="translate(661.00,568.00) scale(1.0253,1)" x="-0.00" y="0" font-size="16.5" fill="#4da6ff">Enable</text>
<text transform="translate(745.90,568.00) scale(1.0722,1)" x="-0.00" y="0" font-size="16.5" fill="#4da6ff">SNMP + E-mail</text>
<text transform="translate(910.10,568.00) scale(1.1340,1)" x="-0.00" y="0" font-size="16.5" fill="#4da6ff">Info</text>
<text transform="translate(1111.30,568.00) scale(0.9820,1)" x="-0.00" y="0" font-size="17.5" fill="#fff">ms</text>
<text transform="translate(1066.90,568.00) scale(1.0613,1)" x="-0.00" y="0" font-size="16.5" fill="#4da6ff">500</text>
<text transform="translate(323.40,610.70) scale(0.9761,1)" x="-0.00" y="0" font-size="16.5" font-weight="bold" fill="#000">PID_error</text>
<text transform="translate(467.90,613.00) scale(0.7753,1)" x="-0.00" y="0" font-size="16.5" fill="#4da6ff">1</text>
<text transform="translate(600.50,613.00) scale(0.9486,1)" x="-0.00" y="0" font-size="17.5" fill="#fff">s</text>
<text transform="translate(567.50,613.00) scale(0.9915,1)" x="-0.00" y="0" font-size="16.5" fill="#4da6ff">10</text>
<text transform="translate(661.00,613.00) scale(1.0253,1)" x="-0.00" y="0" font-size="16.5" fill="#4da6ff">Enable</text>
<text transform="translate(745.90,613.00) scale(1.0722,1)" x="-0.00" y="0" font-size="16.5" fill="#4da6ff">SNMP + E-mail</text>
<text transform="translate(910.10,613.00) scale(1.1340,1)" x="-0.00" y="0" font-size="16.5" fill="#4da6ff">Info</text>
<text transform="translate(1111.30,613.00) scale(0.9820,1)" x="-0.00" y="0" font-size="17.5" fill="#fff">ms</text>
<text transform="translate(1057.40,613.00) scale(1.0487,1)" x="-0.00" y="0" font-size="16.5" fill="#4da6ff">1000</text>
<text transform="translate(85.90,745.00) scale(1.0172,1)" x="-0.00" y="0" font-size="15" fill="#4da6ff">Activity :</text>
<text transform="translate(83.10,767.50) scale(0.9662,1)" x="-0.00" y="0" font-size="15" fill="#4da6ff">Session :</text>
<text transform="translate(149.80,767.50) scale(0.9910,1)" x="-0.00" y="0" font-size="15" fill="#fff">10:54</text>
<text transform="translate(253.50,745.50) scale(1.0291,1)" x="-0.00" y="0" font-size="15" fill="#4da6ff">Multiplex :</text>
<text transform="translate(330.90,745.50) scale(0.9821,1)" x="-0.00" y="0" font-size="15" fill="#fff">NURTS Digital</text>
<text transform="translate(275.60,766.80) scale(0.8933,1)" x="-0.00" y="0" font-size="15" fill="#4da6ff">DVB-T :</text>
<text transform="translate(330.90,766.80) scale(1.0021,1)" x="-0.00" y="0" font-size="15" fill="#fff">642.000 MHz</text>
<text transform="translate(496.80,758.30) scale(0.9522,1)" x="-0.00" y="0" font-size="17.5" fill="#3f7ee8">Record</text>
<text transform="translate(592.20,744.80) scale(1.0560,1)" x="-0.00" y="0" font-size="15" fill="#4da6ff">Overall bitrate :</text>
<text transform="translate(706.40,744.80) scale(1.0476,1)" x="-0.00" y="0" font-size="15" fill="#fff">19.91 Mbit/s</text>
<text transform="translate(617.30,767.40) scale(1.0613,1)" x="-0.00" y="0" font-size="15" fill="#4da6ff">Net bitrate :</text>
<text transform="translate(706.40,767.40) scale(1.0622,1)" x="-0.00" y="0" font-size="15" fill="#fff">18.11 Mbit/s</text>
<text transform="translate(833.50,744.80) scale(0.9648,1)" x="-0.00" y="0" font-size="15" fill="#4da6ff">Device FW :</text>
<text transform="translate(919.20,744.80) scale(0.9550,1)" x="-0.00" y="0" font-size="15" fill="#fff">1.0.1.1</text>
<text transform="translate(817.00,767.40) scale(1.0235,1)" x="-0.00" y="0" font-size="15" fill="#4da6ff">Web Version :</text>
<text transform="translate(919.20,767.40) scale(0.9768,1)" x="-0.00" y="0" font-size="15" fill="#fff">1.11.71</text>
<text transform="translate(993.30,744.80) scale(1.0303,1)" x="-0.00" y="0" font-size="15" fill="#4da6ff">Network ID :</text>
<text transform="translate(1085.40,744.80) scale(1.0048,1)" x="-0.00" y="0" font-size="15" fill="#fff">13209</text>
<text transform="translate(1037.20,767.40) scale(0.8803,1)" x="-0.00" y="0" font-size="15" fill="#4da6ff">TS ID :</text>
<text transform="translate(1085.40,767.40) scale(0.9948,1)" x="-0.00" y="0" font-size="15" fill="#fff">5300</text>
<text transform="translate(1157.90,744.80) scale(0.9919,1)" x="-0.00" y="0" font-size="15" fill="#4da6ff">Temp. :</text>
<text transform="translate(1212.80,744.80) scale(0.9857,1)" x="-0.00" y="0" font-size="15" fill="#fff">51.00 °C</text>
<text transform="translate(1149.40,767.40) scale(1.0262,1)" x="-0.00" y="0" font-size="15" fill="#4da6ff">Uptime :</text>
<text transform="translate(1212.80,767.40) scale(1.0173,1)" x="-0.00" y="0" font-size="15" fill="#fff">03:52:24</text>
</svg>
</body></html>
